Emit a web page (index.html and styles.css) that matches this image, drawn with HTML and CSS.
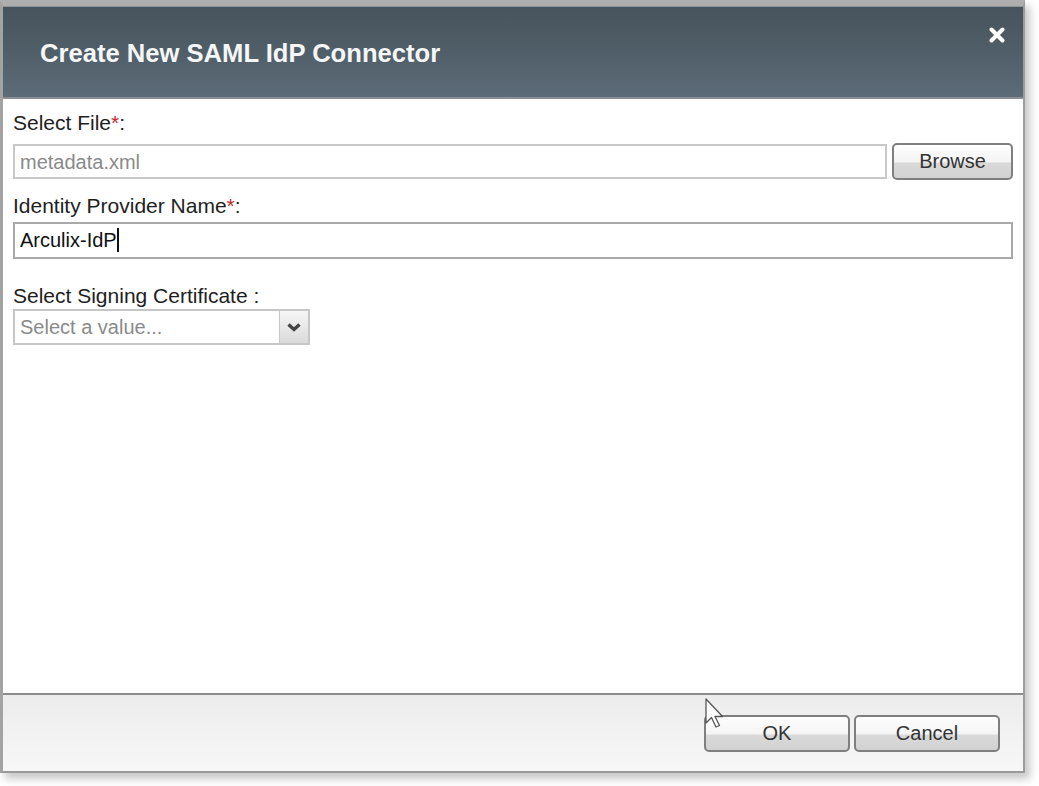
FILE: index.html
```html
<!DOCTYPE html>
<html>
<head>
<meta charset="utf-8">
<link rel="stylesheet" href="styles.css">
</head>
<body>
<div class="dialog">
  <div class="header">
    <h1 class="title">Create New SAML IdP Connector</h1>
    <span class="close" aria-label="close">
      <svg width="16" height="16" viewBox="0 0 16 16"><path d="M2.5 2.5 L13.5 13.5 M13.5 2.5 L2.5 13.5" stroke="#fff" stroke-width="4" stroke-linecap="round"/></svg>
    </span>
  </div>
  <div class="body">
    <label class="label label-file">Select File<span class="req">*</span>:</label>
    <div class="file-row">
      <div class="input input-file">metadata.xml</div>
      <div class="btn btn-browse">Browse</div>
    </div>
    <label class="label label-name">Identity Provider Name<span class="req">*</span>:</label>
    <div class="input input-name">Arculix-IdP<span class="caret"></span></div>
    <label class="label label-cert">Select Signing Certificate&nbsp;:</label>
    <div class="select">
      <div class="select-value">Select a value...</div>
      <div class="select-arrow">
        <svg width="16" height="11" viewBox="0 0 16 11"><path d="M2.5 2.5 L8 7.5 L13.5 2.5" fill="none" stroke="#444" stroke-width="3.4"/></svg>
      </div>
    </div>
  </div>
  <div class="footer">
    <div class="btn btn-foot">OK</div>
    <div class="btn btn-foot">Cancel</div>
  </div>
</div>
<svg class="cursor" width="24" height="36" viewBox="0 0 24 36">
  <path d="M1 1 L1 25 L6.5 19.5 L11 29 L14.5 27.5 L10 18.5 L17.5 18.5 Z" fill="#fff" stroke="#555" stroke-width="1.3" stroke-linejoin="round"/>
</svg>
</body>
</html>
```

FILE: styles.css
```css
* { box-sizing: border-box; }
html, body { margin: 0; padding: 0; background: #ffffff; }
body {
  font-family: "Liberation Sans", Arial, sans-serif;
  width: 1039px;
  height: 786px;
  position: relative;
  overflow: hidden;
}
.dialog {
  width: 1025px;
  border-left: 3px solid #a3a3a3;
  border-right: 2px solid #9c9c9c;
  border-top: 6px solid #aeaeae;
  border-bottom: 2px solid #9a9a9a;
  box-shadow: 5px 6px 8px rgba(0,0,0,0.22);
  background: #fff;
}
.header {
  height: 93px;
  border-top: 1px solid #8d9499;
  border-bottom: 2px solid #8a8f93;
  background: linear-gradient(to bottom, #47545d 0%, #4f5d67 45%, #5c6c78 100%);
  display: flex;
  align-items: flex-start;
  justify-content: space-between;
  padding: 0 18px 0 37px;
}
.title {
  margin: 31px 0 0 0;
  font-size: 25.6px;
  line-height: 30px;
  font-weight: bold;
  color: #f4f6f7;
}
.close {
  margin-top: 20px;
  display: block;
  width: 16px;
  height: 16px;
}
.close svg { display: block; }
.body {
  height: 594px;
  padding: 11px 10px 0 10px;
  display: flex;
  flex-direction: column;
  color: #222;
}
.label {
  display: block;
  font-size: 21px;
  line-height: 23px;
  color: #1e1e1e;
}
.req { color: #c0282d; }
.label-file { margin: 1px 0 0 0; }
.file-row {
  margin-top: 9px;
  display: flex;
  gap: 5px;
  height: 37px;
}
.input {
  height: 36px;
  border: 2px solid #c4c4c4;
  border-top-color: #b8b8b8;
  font-size: 20px;
  line-height: 32px;
  padding-left: 5px;
  background: #fff;
}
.input-file {
  flex: 1;
  color: #8a8a8a;
  border-color: #c8c8c8;
  margin-top: 1px;
  height: 35px;
}
.btn {
  border: 2px solid #7f7f7f;
  border-radius: 5px;
  background: linear-gradient(to bottom, #fefefe 0%, #f4f4f4 52%, #d9d9d9 54%, #d2d2d2 100%);
  color: #333;
  font-size: 20px;
  text-align: center;
}
.btn-browse {
  width: 121px;
  height: 37px;
  line-height: 32px;
}
.label-name { margin-top: 14px; }
.input-name {
  margin-top: 5px;
  color: #111;
  border-color: #a9a9a9;
  height: 37px;
  padding-left: 5px;
}
.caret {
  display: inline-block;
  width: 2px;
  height: 24px;
  background: #111;
  vertical-align: -5px;
}
.label-cert { margin-top: 25px; }
.select {
  margin-top: 2px;
  width: 297px;
  height: 36px;
  border: 2px solid #c6c6c6;
  display: flex;
  background: #fff;
}
.select-value {
  flex: 1;
  font-size: 20px;
  line-height: 32px;
  color: #8a8a8a;
  padding-left: 5px;
}
.select-arrow {
  width: 29px;
  border-left: 1px solid #c6c6c6;
  background: linear-gradient(to bottom, #f6f6f6, #dadada);
  display: flex;
  align-items: center;
  justify-content: center;
}
.select-arrow svg { display: block; }
.footer {
  height: 78px;
  border-top: 2px solid #8c8c8c;
  background: linear-gradient(to bottom, #ececec 0%, #f2f2f2 50%, #f7f7f7 100%);
  display: flex;
  justify-content: flex-end;
  align-items: flex-start;
  gap: 4px;
  padding: 20px 23px 0 0;
}
.btn-foot {
  width: 146px;
  height: 37px;
  line-height: 33px;
}
.cursor {
  position: absolute;
  left: 705px;
  top: 698px;
}
```
